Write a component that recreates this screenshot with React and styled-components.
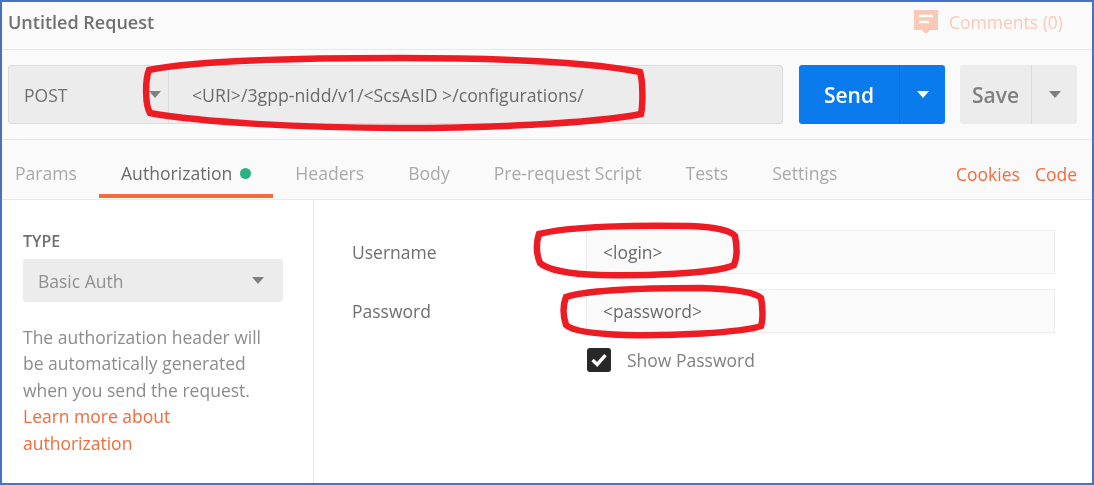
import React from 'react'
import styled, { createGlobalStyle } from 'styled-components'

const TABS = ['Params', 'Authorization', 'Headers', 'Body', 'Pre-request Script', 'Tests', 'Settings']

const App = () => (
  <Frame>
    <GlobalStyle />
    <TitleBar>
      <Title>Untitled Request</Title>
      <Comments>
        <svg width="24" height="24" viewBox="0 0 24 24">
          <path d="M0 0H24V20H16L12 24L8 20H0Z" fill="#f9c9b6" />
          <path d="M5 6H19M5 12H15" stroke="#fff" strokeWidth="2.4" />
        </svg>
        Comments (0)
      </Comments>
    </TitleBar>

    <UrlRow>
      <UrlBox>
        <Method>
          POST
          <Caret />
        </Method>
        <Url>{'<URI>/3gpp-nidd/v1/<ScsAsID >/configurations/'}</Url>
      </UrlBox>
      <SplitButton primary>
        <ButtonLabel primary>Send</ButtonLabel>
        <ButtonArrow primary>
          <Caret color="#fff" />
        </ButtonArrow>
      </SplitButton>
      <SplitButton>
        <ButtonLabel>Save</ButtonLabel>
        <ButtonArrow>
          <Caret />
        </ButtonArrow>
      </SplitButton>
    </UrlRow>

    <TabBar>
      {TABS.map(tab => (
        <Tab key={tab} active={tab === 'Authorization'}>
          {tab}
          {tab === 'Authorization' && <Dot />}
        </Tab>
      ))}
      <TabLinks>
        <span>Cookies</span>
        <span>Code</span>
      </TabLinks>
    </TabBar>

    <Body>
      <Sidebar>
        <TypeLabel>TYPE</TypeLabel>
        <TypeSelect>
          Basic Auth
          <Caret />
        </TypeSelect>
        <Help>
          The authorization header will be automatically generated when you send the request.
          <HelpLink>Learn more about authorization</HelpLink>
        </Help>
      </Sidebar>
      <Form>
        <Field>
          <FieldLabel>Username</FieldLabel>
          <FieldInput>{'<login>'}</FieldInput>
        </Field>
        <Field>
          <FieldLabel>Password</FieldLabel>
          <FieldInput>{'<password>'}</FieldInput>
        </Field>
        <ShowPassword>
          <CheckBox>
            <svg width="16" height="14" viewBox="0 0 16 14">
              <path d="M1.5 7L6.2 11.5L14.5 2.2" fill="none" stroke="#fff" strokeWidth="3.4" />
            </svg>
          </CheckBox>
          Show Password
        </ShowPassword>
      </Form>
    </Body>

    <Marks viewBox="0 0 1094 485" fill="none" stroke="#ed1c24" strokeWidth="6.5">
      <path d="M149 70C200 59 320 58 400 58C500 58 590 62 640 72C643 80 643 105 641 114C590 124 480 128 400 128C300 128 200 122 150 113C145 105 145 80 149 70Z" />
      <path d="M539 234C570 226 640 225 690 226C715 227 730 230 735 236C737 246 737 258 734 265C715 274 640 276 600 275C570 274 548 270 540 263C536 254 536 242 539 234Z" />
      <path d="M566 297C590 289 660 288 700 288C730 289 755 292 761 298C763 308 763 320 761 326C740 333 670 336 625 335C595 334 572 331 566 325C563 316 563 305 566 297Z" />
    </Marks>
  </Frame>
)

const GlobalStyle = createGlobalStyle`
  html, body {
    margin: 0;
    background: #fff;
  }
`

const Frame = styled.div`
  position: relative;
  box-sizing: border-box;
  width: 1094px;
  height: 485px;
  border: 2px solid #4472c4;
  display: flex;
  flex-direction: column;
  overflow: hidden;
  background: #fff;
  font-family: "Open Sans", "Liberation Sans", sans-serif;
  font-size: 17.5px;
  color: #808080;
  & > * {
    filter: blur(0.4px);
  }
`

const TitleBar = styled.div`
  height: 48px;
  flex: none;
  box-sizing: border-box;
  display: flex;
  align-items: center;
  justify-content: space-between;
  padding: 0 29px 7px 6px;
  background: #fafafa;
  border-bottom: 1px solid #e8e8e8;
`

const Title = styled.div`
  font-size: 18px;
  font-weight: 600;
  color: #707070;
`

const Comments = styled.div`
  display: flex;
  align-items: center;
  gap: 11px;
  color: #fbc9b5;
`

const UrlRow = styled.div`
  height: 90px;
  flex: none;
  box-sizing: border-box;
  display: flex;
  padding: 15px 15px 15px 6px;
  background: #fafafa;
  border-bottom: 1px solid #e8e8e8;
`

const UrlBox = styled.div`
  width: 775px;
  box-sizing: border-box;
  display: flex;
  background: #ececec;
  border: 1px solid #dcdcdc;
  border-radius: 3px;
  margin-right: 16px;
`

const Method = styled.div`
  width: 160px;
  flex: none;
  box-sizing: border-box;
  display: flex;
  align-items: center;
  justify-content: space-between;
  padding: 0 7px 0 15px;
  border-right: 1px solid #dcdcdc;
  color: #6f6f6f;
`

const Url = styled.div`
  display: flex;
  align-items: center;
  padding-left: 23px;
  font-size: 17.7px;
  color: #6a6a6a;
`

const Caret = styled.span`
  width: 0;
  height: 0;
  flex: none;
  border-left: 6px solid transparent;
  border-right: 6px solid transparent;
  border-top: 7px solid ${p => p.color || '#808080'};
`

const SplitButton = styled.div`
  width: ${p => (p.primary ? '146px' : '117px')};
  margin-right: 15px;
  display: flex;
  border-radius: 3px;
  background: ${p => (p.primary ? '#097bed' : '#ececec')};
  &:last-child {
    margin-right: 0;
  }
`

const ButtonLabel = styled.div`
  flex: 1;
  display: flex;
  align-items: center;
  justify-content: center;
  font-size: 21px;
  font-weight: 600;
  color: ${p => (p.primary ? '#fff' : '#808080')};
`

const ButtonArrow = styled.div`
  width: 45px;
  display: flex;
  align-items: center;
  justify-content: center;
  border-left: 1px solid ${p => (p.primary ? '#0a6fd4' : '#dcdcdc')};
`

const TabBar = styled.div`
  height: 60px;
  flex: none;
  box-sizing: border-box;
  display: flex;
  background: #fafafa;
  border-bottom: 1px solid #e8e8e8;
  padding-bottom: 1px;
`

const Tab = styled.div`
  display: flex;
  align-items: center;
  gap: 8px;
  box-sizing: border-box;
  padding: 12px 22px 0;
  font-size: 17.6px;
  color: ${p => (p.active ? '#6a6a6a' : '#a9a9a9')};
  border-bottom: 4px solid ${p => (p.active ? '#f26b3a' : 'transparent')};
  &:first-child {
    padding-left: 13px;
  }
`

const Dot = styled.span`
  width: 11px;
  height: 11px;
  border-radius: 50%;
  background: #26b47f;
`

const TabLinks = styled.div`
  margin-left: auto;
  display: flex;
  align-items: center;
  gap: 15px;
  padding: 13px 15px 4px 0;
  color: #f26b3a;
`

const Body = styled.div`
  flex: 1;
  display: flex;
  min-height: 0;
`

const Sidebar = styled.div`
  width: 312px;
  flex: none;
  box-sizing: border-box;
  padding: 31px 30px 0 21px;
  border-right: 1px solid #e8e8e8;
`

const TypeLabel = styled.div`
  font-size: 16px;
  font-weight: 600;
  line-height: 20px;
  color: #707070;
`

const TypeSelect = styled.div`
  height: 43px;
  margin-top: 8px;
  display: flex;
  align-items: center;
  justify-content: space-between;
  padding: 0 19px 0 15px;
  border-radius: 3px;
  background: #ececec;
  color: #909090;
`

const Help = styled.div`
  margin-top: 21.5px;
  padding-right: 5px;
  line-height: 26.5px;
  color: #8c8c8c;
`

const HelpLink = styled.div`
  color: #f26b3a;
`

const Form = styled.div`
  flex: 1;
  padding: 30px 37px 0 38px;
`

const Field = styled.div`
  display: flex;
  align-items: center;
  height: 44px;
  margin-bottom: 15px;
`

const FieldLabel = styled.div`
  width: 234px;
  flex: none;
  color: #6f6f6f;
`

const FieldInput = styled.div`
  flex: 1;
  align-self: stretch;
  display: flex;
  align-items: center;
  padding-left: 16px;
  background: #fafafa;
  border: 1px solid #ececec;
  color: #6a6a6a;
`

const ShowPassword = styled.div`
  display: flex;
  align-items: center;
  gap: 16px;
  margin: 0 0 0 235px;
  color: #808080;
`

const CheckBox = styled.span`
  width: 24px;
  height: 24px;
  display: flex;
  align-items: center;
  justify-content: center;
  border-radius: 3px;
  background: #282828;
`

const Marks = styled.svg`
  position: absolute;
  left: -2px;
  top: -2px;
  width: 1094px;
  height: 485px;
  pointer-events: none;
`

export default App
